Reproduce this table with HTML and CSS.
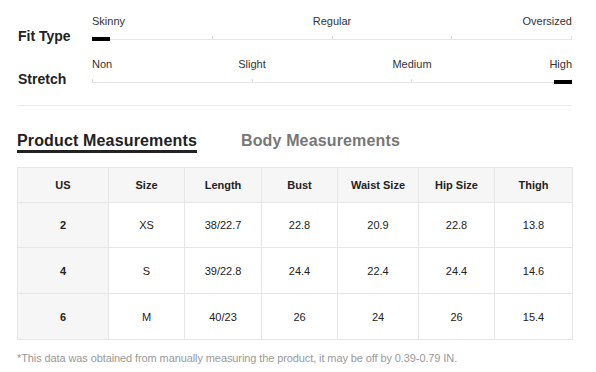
FILE: index.html
```html
<!DOCTYPE html>
<html lang="en">
<head>
<meta charset="utf-8">
<title>Size Info</title>
<link rel="stylesheet" href="styles.css">
</head>
<body>
<div class="page">
  <section class="attrs">
    <div class="attr attr-fit">
      <div class="attr-name">Fit Type</div>
      <div class="scale">
        <div class="scale-labels scale-labels-4">
          <span class="lbl lbl-start">Skinny</span>
          <span class="lbl lbl-mid">Regular</span>
          <span class="lbl lbl-end">Oversized</span>
        </div>
        <div class="track">
          <i class="tick"></i><i class="tick"></i><i class="tick"></i><i class="tick"></i><i class="tick"></i>
          <b class="marker marker-start"></b>
        </div>
      </div>
    </div>
    <div class="attr attr-stretch">
      <div class="attr-name">Stretch</div>
      <div class="scale">
        <div class="scale-labels scale-labels-6">
          <span class="lbl lbl-start">Non</span>
          <span class="lbl lbl-mid1">Slight</span>
          <span class="lbl lbl-mid2">Medium</span>
          <span class="lbl lbl-end">High</span>
        </div>
        <div class="track">
          <i class="tick"></i><i class="tick"></i><i class="tick"></i><i class="tick"></i>
          <b class="marker marker-end"></b>
        </div>
      </div>
    </div>
  </section>

  <nav class="tabs">
    <span class="tab tab-active">Product Measurements</span>
    <span class="tab">Body Measurements</span>
  </nav>

  <table class="sizes">
    <colgroup>
      <col class="c1"><col class="c2"><col class="c3"><col class="c4"><col class="c5"><col class="c6"><col class="c7">
    </colgroup>
    <thead>
      <tr><th>US</th><th>Size</th><th>Length</th><th>Bust</th><th>Waist Size</th><th>Hip Size</th><th>Thigh</th></tr>
    </thead>
    <tbody>
      <tr class="r1"><th>2</th><td>XS</td><td>38/22.7</td><td>22.8</td><td>20.9</td><td>22.8</td><td>13.8</td></tr>
      <tr><th>4</th><td>S</td><td>39/22.8</td><td>24.4</td><td>22.4</td><td>24.4</td><td>14.6</td></tr>
      <tr><th>6</th><td>M</td><td>40/23</td><td>26</td><td>24</td><td>26</td><td>15.4</td></tr>
    </tbody>
  </table>

  <p class="note">*This data was obtained from manually measuring the product, it may be off by 0.39-0.79 IN.</p>
</div>
</body>
</html>
```

FILE: styles.css
```css
* { box-sizing: border-box; }
html, body { margin: 0; padding: 0; background: #fff; }
body {
  font-family: "Liberation Sans", Arial, sans-serif;
  color: #222;
}
.page {
  width: 596px;
  padding: 0 24px 0 17px;
}

/* attributes */
.attrs {
  padding-top: 15px;
  padding-bottom: 18px;
  border-bottom: 1px solid #ebebeb;
}
.attr {
  display: flex;
  align-items: flex-start;
}
.attr-stretch { margin-top: 14px; }
.attr-name {
  width: 75px;
  padding-left: 1px;
  margin-top: 13px;
  font-size: 14px;
  font-weight: bold;
  line-height: 16px;
  color: #222;
}
.scale { width: 480px; }
.scale-labels {
  display: grid;
  font-size: 11px;
  line-height: 13px;
  color: #333;
}
.scale-labels-4 { grid-template-columns: repeat(4, 1fr); }
.scale-labels-6 { grid-template-columns: repeat(6, 1fr); }
.scale-labels-4 .lbl-start { grid-column: 1; justify-self: start; }
.scale-labels-4 .lbl-mid { grid-column: 2 / 4; justify-self: center; }
.scale-labels-4 .lbl-end { grid-column: 4; justify-self: end; }
.scale-labels-6 .lbl-start { grid-column: 1; justify-self: start; }
.scale-labels-6 .lbl-mid1 { grid-column: 2 / 4; justify-self: center; }
.scale-labels-6 .lbl-mid2 { grid-column: 4 / 6; justify-self: center; }
.scale-labels-6 .lbl-end { grid-column: 6; justify-self: end; }

.track {
  position: relative;
  height: 4px;
  margin-top: 8px;
  display: flex;
  justify-content: space-between;
  align-items: flex-end;
  border-bottom: 1px solid #e6e6e6;
}
.tick {
  display: block;
  width: 1px;
  height: 3px;
  background: #dcdcdc;
}
.marker {
  position: absolute;
  top: 1px;
  width: 18px;
  height: 4px;
  background: #000;
}
.marker-start { left: 0; }
.marker-end { right: 0; }

/* tabs */
.tabs {
  display: flex;
  gap: 44px;
  margin-top: 26px;
}
.tab {
  font-size: 16px;
  font-weight: bold;
  line-height: 18px;
  letter-spacing: 0.15px;
  color: #777;
  padding-bottom: 3px;
}
.tab-active {
  color: #222;
  padding-bottom: 0;
  border-bottom: 3px solid #222;
}

/* table */
.sizes {
  margin-top: 14px;
  width: 555px;
  border-collapse: collapse;
  table-layout: fixed;
  font-size: 11px;
  text-align: center;
}
.c1 { width: 91px; }
.c2 { width: 76px; }
.c3 { width: 77px; }
.c4 { width: 76px; }
.c5 { width: 81px; }
.c6 { width: 76px; }
.c7 { width: 78px; }
.sizes th, .sizes td {
  border: 1px solid #e6e6e6;
  padding: 0;
  color: #222;
}
.sizes thead th {
  background: #f6f6f6;
  height: 35px;
  font-weight: bold;
}
.sizes tbody th {
  background: #f6f6f6;
  font-weight: bold;
}
.sizes tbody td { font-weight: normal; }
.sizes tbody tr { height: 46px; }
.sizes tbody tr.r1 { height: 45px; }

.note {
  margin: 12px 0 0;
  font-size: 11px;
  line-height: 13px;
  letter-spacing: -0.1px;
  color: #999;
}
```
